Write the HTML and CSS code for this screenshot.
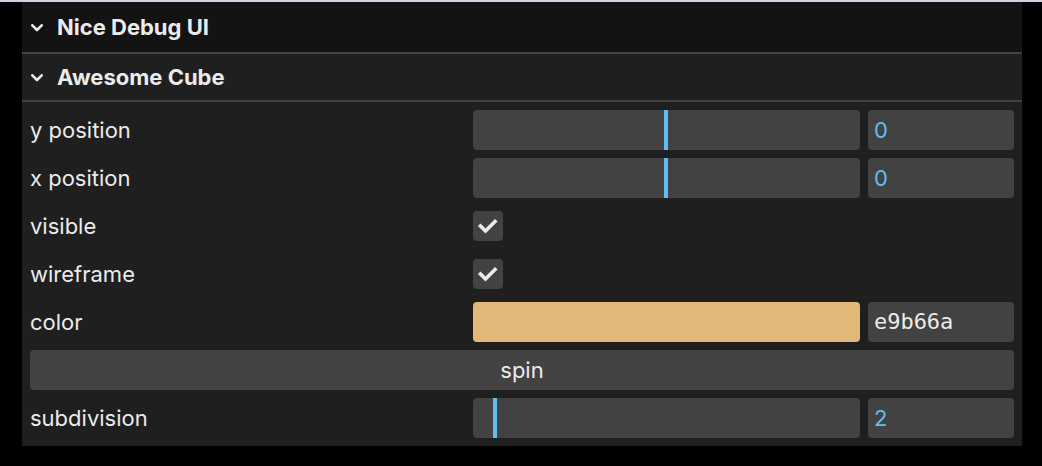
FILE: index.html
```html
<!DOCTYPE html>
<html>
<head>
<meta charset="utf-8">
<link rel="stylesheet" href="styles.css">
</head>
<body>
<div class="top-strip"></div>
<div class="stage">
  <div class="gui">
    <div class="title root-title">
      <svg class="chev" width="12" height="8" viewBox="0 0 12 8"><polyline points="1.3,1.3 6,6 10.7,1.3" fill="none" stroke="#ebebeb" stroke-width="2.6" stroke-linecap="round" stroke-linejoin="round"/></svg>
      <span>Nice Debug UI</span>
    </div>
    <div class="folder">
      <div class="title folder-title">
        <svg class="chev" width="12" height="8" viewBox="0 0 12 8"><polyline points="1.3,1.3 6,6 10.7,1.3" fill="none" stroke="#ebebeb" stroke-width="2.6" stroke-linecap="round" stroke-linejoin="round"/></svg>
        <span>Awesome Cube</span>
      </div>
      <div class="children">
        <div class="row">
          <div class="name">y position</div>
          <div class="widget">
            <div class="slider"><div class="fill" style="width:49.4%"></div></div>
            <div class="num-input">0</div>
          </div>
        </div>
        <div class="row">
          <div class="name">x position</div>
          <div class="widget">
            <div class="slider"><div class="fill" style="width:49.4%"></div></div>
            <div class="num-input">0</div>
          </div>
        </div>
        <div class="row">
          <div class="name">visible</div>
          <div class="widget">
            <div class="checkbox">
              <svg width="30" height="30" viewBox="0 0 30 30"><polyline points="7.5,15 12.5,20 22,10.5" fill="none" stroke="#ebebeb" stroke-width="3.6" stroke-linecap="square" stroke-linejoin="miter"/></svg>
            </div>
          </div>
        </div>
        <div class="row">
          <div class="name">wireframe</div>
          <div class="widget">
            <div class="checkbox">
              <svg width="30" height="30" viewBox="0 0 30 30"><polyline points="7.5,15 12.5,20 22,10.5" fill="none" stroke="#ebebeb" stroke-width="3.6" stroke-linecap="square" stroke-linejoin="miter"/></svg>
            </div>
          </div>
        </div>
        <div class="row">
          <div class="name">color</div>
          <div class="widget">
            <div class="swatch"></div>
            <div class="hex-input">e9b66a</div>
          </div>
        </div>
        <div class="row">
          <div class="button">spin</div>
        </div>
        <div class="row">
          <div class="name">subdivision</div>
          <div class="widget">
            <div class="slider"><div class="fill" style="width:5.2%"></div></div>
            <div class="num-input">2</div>
          </div>
        </div>
      </div>
    </div>
  </div>
</div>
</body>
</html>
```

FILE: styles.css
```css
html, body {
  margin: 0;
  padding: 0;
  background: #000000;
  height: 100%;
}

body {
  font-family: "Inter", "Noto Sans", sans-serif;
  color: #ebebeb;
  font-size: 22px;
}

.top-strip {
  height: 2px;
  background: #d3d1e4;
}

.stage {
  padding-left: 22px;
}

.gui {
  width: 1000px;
  background: #1f1f1f;
}

.title {
  display: flex;
  align-items: center;
  box-sizing: border-box;
  height: 50px;
  padding: 0 9px;
  font-weight: 700;
  font-size: 22px;
  color: #ebebeb;
}

.chev {
  flex: 0 0 auto;
  margin-right: 14px;
  margin-top: 1px;
}

.root-title {
  background: #131313;
}

.folder-title {
  background: #1f1f1f;
  border-top: 2px solid #424242;
  border-bottom: 2px solid #424242;
}

.children {
  display: flex;
  flex-direction: column;
  gap: 8px;
  padding: 8px 8px;
}

.row {
  display: flex;
  align-items: center;
  min-height: 40px;
}

.name {
  flex: 0 0 45%;
  line-height: 40px;
  white-space: nowrap;
}

.widget {
  flex: 1 1 auto;
  display: flex;
  align-items: center;
  min-width: 0;
}

.slider {
  flex: 1 1 0;
  height: 40px;
  background: #424242;
  border-radius: 4px;
  margin-right: 8px;
  overflow: hidden;
}

.fill {
  height: 100%;
  box-sizing: content-box;
  border-right: 4px solid #5dbff6;
}

.num-input,
.hex-input {
  flex: 0 0 27%;
  box-sizing: border-box;
  height: 40px;
  line-height: 40px;
  background: #424242;
  border-radius: 4px;
  padding-left: 6px;
}

.num-input {
  color: #5dbff6;
}

.hex-input {
  font-family: "DejaVu Sans Mono", "Liberation Mono", monospace;
  color: #ebebeb;
}

.checkbox {
  width: 30px;
  height: 30px;
  background: #424242;
  border-radius: 4px;
}

.checkbox svg {
  display: block;
}

.swatch {
  flex: 1 1 0;
  height: 40px;
  background: #e1b877;
  border-radius: 4px;
  margin-right: 8px;
}

.button {
  flex: 1 1 auto;
  height: 40px;
  line-height: 40px;
  background: #424242;
  border-radius: 4px;
  text-align: center;
}
```
